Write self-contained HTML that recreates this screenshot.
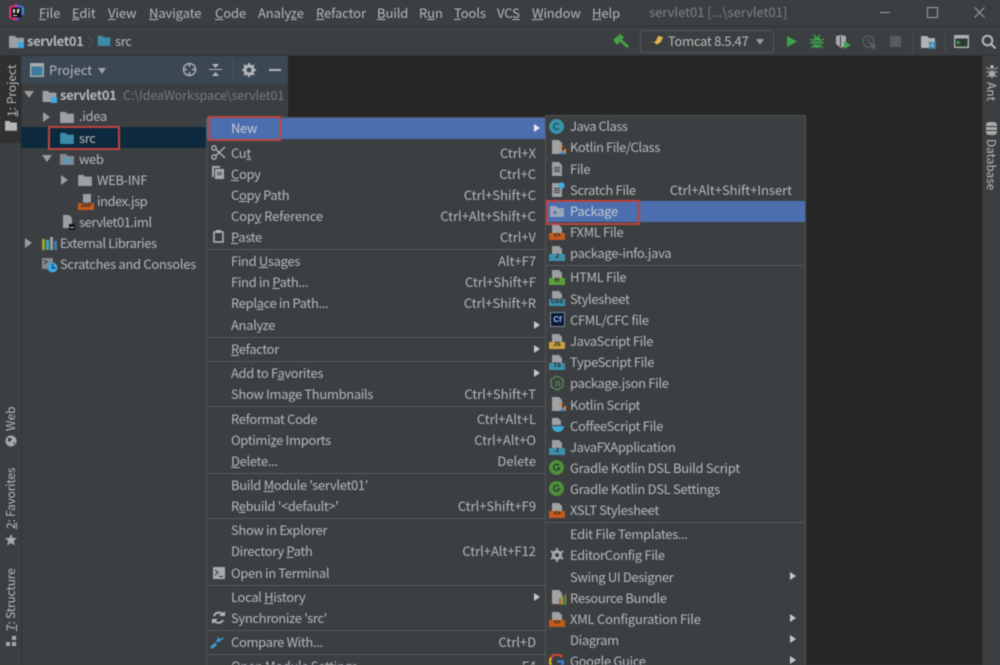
<!DOCTYPE html>
<html><head><meta charset="utf-8"><style>
html,body{margin:0;padding:0;width:1000px;height:665px;overflow:hidden;background:#3c3f41}
#w{position:absolute;left:0;top:0;width:1000px;height:665px;overflow:hidden;filter:blur(.4px);font-family:"Noto Sans CJK SC","Liberation Sans",sans-serif;font-size:13px;color:#b6b8ba;background:#3c3f41}
.a,.t,.s,svg.i{position:absolute}
.t,.s{white-space:nowrap;line-height:16px;height:16px}
.t{letter-spacing:-.35px}
.s{letter-spacing:-.04px}
.m{letter-spacing:-.1px}
u{text-underline-offset:1px;text-decoration-thickness:1px}
.v{transform-origin:0 0;transform:rotate(-90deg);letter-spacing:-.2px}
.sep{position:absolute;height:1px;background:#55585a}
.tri{position:absolute;width:0;height:0;border-left:6px solid #c4c6c8;border-top:4.5px solid transparent;border-bottom:4.5px solid transparent}
.tr{position:absolute;width:0;height:0;border-left:7px solid #9a9c9e;border-top:5px solid transparent;border-bottom:5px solid transparent}
.td{position:absolute;width:0;height:0;border-top:7px solid #9a9c9e;border-left:5px solid transparent;border-right:5px solid transparent}
.tag{position:absolute;font:bold 6px/7px "Liberation Sans",sans-serif;text-align:center;width:16px;height:7px}
.red{position:absolute;border:2px solid #bd443e;box-sizing:border-box}
</style></head><body><div id="w">
<svg width="0" height="0" style="position:absolute"><defs>
<symbol id="fo" viewBox="0 0 16 14"><path d="M0 1h6l2 2h8v11H0z"/></symbol>
<symbol id="fi" viewBox="0 0 16 16"><path fill="#9da0a2" d="M3 1h7l3 3v11H3z"/><path fill="#3c3f41" d="M5 6h6v1H5zM5 8h6v1H5zM5 10h6v1H5z"/></symbol>
</defs></svg>

<!-- title bar -->
<div class="a" style="left:0;top:0;width:1000px;height:26px;background:#3c3f41"></div>
<div class="a" style="left:0;top:26px;width:1000px;height:1px;background:#323232"></div>
<svg class="i" style="left:8px;top:4px" width="17" height="17" viewBox="0 0 17 17"><path fill="#d9336f" d="M1 3 8 0v17l-7-3z"/><path fill="#7a4fd8" d="M8 0l8 3v7L8 17z"/><path fill="#2f8fd8" d="M12 1l4 3v5l-4 3z"/><rect x="3.500" y="3.500" width="10" height="10" fill="#111"/><path fill="#ddd" d="M5 11h4v1H5zM5 5h2v4H5zM9 5h3v1h-1v3H9z"/></svg>
<span class="t m" style="left:39px;top:5px"><u>F</u>ile</span>
<span class="t m" style="left:72px;top:5px"><u>E</u>dit</span>
<span class="t m" style="left:108px;top:5px"><u>V</u>iew</span>
<span class="t m" style="left:149px;top:5px"><u>N</u>avigate</span>
<span class="t m" style="left:215px;top:5px"><u>C</u>ode</span>
<span class="t m" style="left:258px;top:5px">Analy<u>z</u>e</span>
<span class="t m" style="left:316px;top:5px"><u>R</u>efactor</span>
<span class="t m" style="left:377px;top:5px"><u>B</u>uild</span>
<span class="t m" style="left:419px;top:5px">R<u>u</u>n</span>
<span class="t m" style="left:454px;top:5px"><u>T</u>ools</span>
<span class="t m" style="left:497px;top:5px">VC<u>S</u></span>
<span class="t m" style="left:532px;top:5px"><u>W</u>indow</span>
<span class="t m" style="left:592px;top:5px"><u>H</u>elp</span>
<span class="t" style="left:649px;top:4px;color:#7f8183;letter-spacing:-.02px">servlet01 [...\servlet01]</span>
<div class="a" style="left:880px;top:12px;width:10px;height:1px;background:#a0a2a4"></div>
<div class="a" style="left:927px;top:7px;width:9px;height:9px;border:1px solid #a0a2a4"></div>
<svg class="i" style="left:974px;top:7px" width="11" height="11"><path d="M.5.5l10 10M10.500.5l-10 10" stroke="#a0a2a4" fill="none"/></svg>

<!-- nav bar -->
<svg class="i" style="left:9px;top:35px;fill:#9da0a2" width="15" height="13"><use href="#fo"/></svg>
<div class="a" style="left:18px;top:42px;width:6px;height:6px;background:#3fa8e0"></div>
<span class="t" style="left:27px;top:33px;font-weight:bold">servlet01</span>
<svg class="i" style="left:87px;top:34px" width="6" height="15"><path d="M1 1l4 6.500-4 6.500" stroke="#555" fill="none"/></svg>
<svg class="i" style="left:97px;top:35px;fill:#3d8aa8" width="14" height="11"><use href="#fo"/></svg>
<span class="t" style="left:115px;top:33px">src</span>

<svg class="i" style="left:612px;top:33px" width="18" height="16"><path d="M1 7L8 1l4 3-7 8z" fill="#43a047"/><path d="M7 6l9 8" stroke="#43a047" stroke-width="3"/></svg>
<div class="a" style="left:640px;top:30px;width:132px;height:21px;border:1px solid #55585a;border-radius:3px"></div>
<svg class="i" style="left:650px;top:35px" width="14" height="11"><path d="M1 8l5-2 2-5 5 1-2 5-5 3z" fill="#e0b84a"/><path d="M0 9l7 1-3-3z" fill="#333"/></svg>
<span class="t" style="left:668px;top:33px;letter-spacing:-.3px;color:#bbb">Tomcat 8.5.47</span>
<div class="a" style="left:756px;top:39px;width:0;height:0;border-top:6px solid #9a9c9e;border-left:4.500px solid transparent;border-right:4.500px solid transparent"></div>
<svg class="i" style="left:786px;top:35px" width="12" height="13"><path d="M1 1l10 5.500L1 12z" fill="#3fa34d"/></svg>
<svg class="i" style="left:810px;top:34px" width="14" height="15"><ellipse cx="7" cy="8.500" rx="4.500" ry="5.500" fill="#3fa34d"/><path d="M0 5l4 2M14 5l-4 2M0 9h3M14 9h-3M1 14l3-2M13 14l-3-2M4 1l2 2M10 1L8 3" stroke="#3fa34d" stroke-width="1.300"/><path d="M3 7h8M3 10h8" stroke="#3c3f41"/></svg>
<svg class="i" style="left:835px;top:34px" width="17" height="16"><path d="M1 2l5-1 5 1v6l-1 4-4 2-5-4z" fill="#a8aaac"/><path d="M5 2h1v11H5z" fill="#3c3f41"/><path d="M9 7l7 4-7 4z" fill="#3fa34d"/></svg>
<svg class="i" style="left:862px;top:35px" width="16" height="15"><circle cx="6.500" cy="6.500" r="5.500" fill="none" stroke="#5c5f61" stroke-width="1.300"/><path d="M6.500 3v4l2 2" stroke="#5c5f61" fill="none"/><path d="M8 7l7 4-3 1 1 3-3-1z" fill="#5c5f61"/></svg>
<div class="a" style="left:890px;top:36px;width:11px;height:11px;background:#595b5d"></div>
<div class="a" style="left:912px;top:32px;width:1px;height:20px;background:#4a4d4f"></div>
<svg class="i" style="left:921px;top:35px" width="16" height="14"><path d="M0 1h6l2 2h6v10H0z" fill="#afb1b3"/><path d="M8 7h3v3H8zM12 7h3v3h-3zM8 11h3v3H8zM12 11h3v3h-3z" fill="#2f82b8"/></svg>
<div class="a" style="left:945px;top:32px;width:1px;height:20px;background:#4a4d4f"></div>
<svg class="i" style="left:954px;top:35px" width="15" height="13"><rect x=".7" y=".7" width="13.600" height="11.600" fill="#2d3a33" stroke="#afb1b3" stroke-width="1.400"/><rect x="1" y="1" width="13" height="2.500" fill="#afb1b3"/><path d="M3 5.500l4 2-4 2z" fill="#3fa34d"/></svg>
<svg class="i" style="left:981px;top:34px" width="16" height="15"><circle cx="6.500" cy="6.500" r="4.800" fill="none" stroke="#b4b6b8" stroke-width="2"/><path d="M10 10l4.500 4.500" stroke="#b4b6b8" stroke-width="2.200"/></svg>
<div class="a" style="left:0;top:55px;width:1000px;height:1px;background:#303234"></div>

<!-- editor -->
<div class="a" style="left:288px;top:56px;width:695px;height:609px;background:#262626"></div>
<!-- right strip -->
<div class="a" style="left:982px;top:56px;width:18px;height:609px;background:#3c3f41;border-left:1px solid #333"></div>
<svg class="i" style="left:985px;top:64px" width="14" height="14"><ellipse cx="7" cy="3" rx="2" ry="2" fill="#a8aaac"/><ellipse cx="7" cy="10" rx="3" ry="3.500" fill="#a8aaac"/><path d="M1 3l4 3M13 3L9 6M1 8h4M13 8H9M2 13l3-3M12 13L9 10" stroke="#a8aaac"/></svg>
<span class="t" style="left:999px;top:82px;font-size:12px;transform:rotate(90deg);transform-origin:0 0;letter-spacing:0">Ant</span>
<svg class="i" style="left:985px;top:121px" width="13" height="15"><rect x="1" y="1" width="11" height="13" rx="3" fill="#a8aaac"/><path d="M1 5.500h11M1 9.500h11" stroke="#3c3f41"/></svg>
<span class="t" style="left:999px;top:139px;font-size:12px;transform:rotate(90deg);transform-origin:0 0;letter-spacing:-.1px">Database</span>

<!-- left strip -->
<div class="a" style="left:0;top:56px;width:21px;height:609px;background:#3c3f41;border-right:1px solid #333"></div>
<div class="a" style="left:0;top:56px;width:21px;height:87px;background:#2e3032"></div>
<span class="t v" style="left:4px;top:117px;font-size:12px;letter-spacing:0"><u>1</u>: Project</span>
<svg class="i" style="left:5px;top:120px;fill:#b4b6b8" width="12" height="11"><use href="#fo"/></svg>
<span class="t v" style="left:3px;top:431px;font-size:12px;letter-spacing:0">Web</span>
<svg class="i" style="left:5px;top:435px" width="12" height="12"><circle cx="6" cy="6" r="5.500" fill="#a8aaac"/><path d="M3 3h4l-1 3-3 1zM8 8l2-1-1 3z" fill="#3c3f41"/></svg>
<span class="t v" style="left:3px;top:529px;font-size:12px"><u>2</u>: Favorites</span>
<svg class="i" style="left:4px;top:533px" width="14" height="14"><path d="M7 1l1.800 4H13l-3.300 3 1.200 4.500L7 10l-3.900 2.500L4.300 8 1 5h4.200z" fill="#a8aaac"/></svg>
<span class="t v" style="left:3px;top:631px;font-size:12px"><u>7</u>: Structure</span>
<svg class="i" style="left:6px;top:636px" width="10" height="11"><path d="M6 0h4v4H6zM0 6h4v4H0zM6 6h4v4H6z" fill="#a8aaac"/></svg>

<!-- project panel -->
<div class="a" style="left:22px;top:56px;width:266px;height:609px;background:#3c3f41"></div>
<div class="a" style="left:21px;top:56px;width:267px;height:27px;background:#3c4754"></div>
<svg class="i" style="left:30px;top:63px" width="14" height="14"><rect x=".7" y=".7" width="12.600" height="12.600" fill="#3f7a9e" stroke="#a8aaac" stroke-width="1.400"/><rect x="1" y="1" width="12" height="2.500" fill="#a8aaac"/></svg>
<span class="t" style="left:49px;top:62px;letter-spacing:0">Project</span>
<div class="a" style="left:98px;top:68px;width:0;height:0;border-top:6px solid #a0a2a4;border-left:4.500px solid transparent;border-right:4.500px solid transparent"></div>
<svg class="i" style="left:182px;top:62px" width="15" height="15"><circle cx="7.500" cy="7.500" r="6" fill="none" stroke="#b4b6b8" stroke-width="1.300"/><path d="M7.500 1v4M7.500 10v4M1 7.500h4M10 7.500h4" stroke="#b4b6b8" stroke-width="1.500"/></svg>
<svg class="i" style="left:209px;top:63px" width="13" height="14"><path d="M0 6.500h13" stroke="#b4b6b8"/><path d="M3 1h7L6.500 5zM3 13h7L6.500 9z" fill="#b4b6b8"/></svg>
<div class="a" style="left:232px;top:60px;width:1px;height:20px;background:#4b5560"></div>
<svg class="i" style="left:242px;top:63px" width="14" height="14"><circle cx="7" cy="7" r="4" fill="none" stroke="#b4b6b8" stroke-width="3"/><path d="M7 0v3M7 11v3M0 7h3M11 7h3M2 2l2 2M10 10l2 2M12 2l-2 2M4 10l-2 2" stroke="#b4b6b8" stroke-width="2"/></svg>
<div class="a" style="left:269px;top:69px;width:12px;height:2px;background:#b4b6b8"></div>

<!-- tree -->
<div class="a" style="left:21px;top:127px;width:186px;height:21px;background:#0d293e"></div>
<div class="td" style="left:24px;top:91px"></div>
<svg class="i" style="left:42px;top:90px;fill:#9da0a2" width="15" height="12"><use href="#fo"/></svg>
<div class="a" style="left:51px;top:97px;width:6px;height:6px;background:#3fa8e0"></div>
<span class="t" style="left:60px;top:87px;font-weight:bold">servlet01</span>
<span class="t" style="left:123px;top:87px;color:#787a7c;font-size:12.500px;letter-spacing:-.08px">C:\IdeaWorkspace\servlet01</span>
<div class="tr" style="left:43px;top:112px"></div>
<svg class="i" style="left:60px;top:111px;fill:#9da0a2" width="14" height="12"><use href="#fo"/></svg>
<span class="t" style="left:79px;top:108px">.idea</span>
<svg class="i" style="left:60px;top:132px;fill:#3d8aa8" width="14" height="12"><use href="#fo"/></svg>
<span class="t" style="left:79px;top:130px;color:#bbb">src</span>
<div class="td" style="left:42px;top:155px"></div>
<svg class="i" style="left:60px;top:153px" width="14" height="12"><path d="M0 1h6l2 2h6v9H0z" fill="#7f8a90"/><circle cx="6.500" cy="7.500" r="2" fill="none" stroke="#3fa8e0" stroke-width="1.300"/></svg>
<span class="t" style="left:79px;top:151px">web</span>
<div class="tr" style="left:61px;top:175px"></div>
<svg class="i" style="left:78px;top:174px;fill:#9da0a2" width="14" height="12"><use href="#fo"/></svg>
<span class="t" style="left:97px;top:172px">WEB-INF</span>
<svg class="i" style="left:80px;top:194px" width="14" height="11"><path d="M3 0h8v11H3z" fill="#9da0a2"/></svg>
<div class="tag" style="left:78px;top:203px;height:7px;background:#c25a1e;color:#2b2b2b">JSP</div>
<span class="t" style="left:97px;top:193px;letter-spacing:-.5px">index.jsp</span>
<svg class="i" style="left:62px;top:215px" width="13" height="15"><path d="M1 0h6l3 3v10H1z" fill="#9da0a2"/><rect x="7" y="9" width="6" height="6" fill="#111"/><rect x="8" y="12" width="4" height="1" fill="#ccc"/></svg>
<span class="t" style="left:79px;top:214px;letter-spacing:-.45px">servlet01.iml</span>
<div class="tr" style="left:25px;top:238px"></div>
<svg class="i" style="left:42px;top:237px" width="15" height="13"><path d="M0 2h3v11H0z" fill="#a0a23e"/><path d="M4 3h3v10H4z" fill="#3fa8b0"/><path d="M8 0h3v13H8z" fill="#9da0a2"/><path d="M12 4h3v9h-3z" fill="#3f7fb0"/></svg>
<span class="t" style="left:60px;top:235px;letter-spacing:-.45px">External Libraries</span>
<svg class="i" style="left:42px;top:257px" width="16" height="16"><path d="M0 1h11v7L7 12H0z" fill="#7f8a90"/><path d="M2 3l3 2-3 2" stroke="#333" fill="none"/><circle cx="10.500" cy="10.500" r="5" fill="#3fa8e0"/><path d="M10.500 7v4h3" stroke="#123" fill="none"/></svg>
<span class="t" style="left:60px;top:256px;letter-spacing:-.32px">Scratches and Consoles</span>

<!-- main menu -->
<div class="a" style="left:206px;top:117px;width:340px;height:549px;background:#3c3f41;border:1px solid #515355;box-sizing:border-box"></div>
<div class="a" style="left:207px;top:118px;width:338px;height:21px;background:#4b6eaf"></div>
<span class="t" style="left:231px;top:120px;color:#c6c9cc">New</span>
<div class="tri" style="left:534px;top:124px;border-left-color:#e8eaec"></div>

<svg class="i" style="left:211px;top:145px" width="15" height="15"><circle cx="3" cy="3" r="2.200" fill="none" stroke="#b4b6b8" stroke-width="1.300"/><circle cx="3" cy="12" r="2.200" fill="none" stroke="#b4b6b8" stroke-width="1.300"/><path d="M5 4.500L14 13M5 10.500L14 2" stroke="#b4b6b8" stroke-width="1.300"/></svg>
<span class="t" style="left:231px;top:145px">Cu<u>t</u></span><span class="s" style="right:464px;top:145px">Ctrl+X</span>
<svg class="i" style="left:212px;top:166px" width="13" height="14"><path d="M0 0h8v2H2v9H0z" fill="#a8aaac"/><path d="M3 3h9v10H3z" fill="#a8aaac"/><path d="M5 6h5v1H5zM5 8h5v1H5z" fill="#3c3f41"/></svg>
<span class="t" style="left:231px;top:166px"><u>C</u>opy</span><span class="s" style="right:464px;top:166px">Ctrl+C</span>
<span class="t" style="left:231px;top:187px">C<u>o</u>py Path</span><span class="s" style="right:464px;top:187px">Ctrl+Shift+C</span>
<span class="t" style="left:231px;top:208px;letter-spacing:-.15px">Cop<u>y</u> Reference</span><span class="s" style="right:464px;top:208px">Ctrl+Alt+Shift+C</span>
<svg class="i" style="left:213px;top:230px" width="11" height="13"><rect x="1" y="2" width="9" height="10" fill="none" stroke="#b4b6b8" stroke-width="1.500"/><rect x="3" y="0" width="5" height="3" fill="#b4b6b8"/></svg>
<span class="t" style="left:231px;top:229px"><u>P</u>aste</span><span class="s" style="right:464px;top:229px">Ctrl+V</span>
<div class="sep" style="left:207px;top:249px;width:338px"></div>
<span class="t" style="left:231px;top:253px">Find <u>U</u>sages</span><span class="s" style="right:464px;top:253px">Alt+F7</span>
<span class="t" style="left:231px;top:274px">Find in <u>P</u>ath...</span><span class="s" style="right:464px;top:274px">Ctrl+Shift+F</span>
<span class="t" style="left:231px;top:295px">Repl<u>a</u>ce in Path...</span><span class="s" style="right:464px;top:295px">Ctrl+Shift+R</span>
<span class="t" style="left:231px;top:317px">Analyze</span><div class="tri" style="left:534px;top:321px"></div>
<div class="sep" style="left:207px;top:337px;width:338px"></div>
<span class="t" style="left:231px;top:341px"><u>R</u>efactor</span><div class="tri" style="left:534px;top:345px"></div>
<div class="sep" style="left:207px;top:361px;width:338px"></div>
<span class="t" style="left:231px;top:365px">Add to F<u>a</u>vorites</span><div class="tri" style="left:534px;top:369px"></div>
<span class="t" style="left:231px;top:386px">Show Image Thumbnails</span><span class="s" style="right:464px;top:386px">Ctrl+Shift+T</span>
<div class="sep" style="left:207px;top:406px;width:338px"></div>
<span class="t" style="left:231px;top:411px">Reformat Code</span><span class="s" style="right:464px;top:411px">Ctrl+Alt+L</span>
<span class="t" style="left:231px;top:432px">Optimi<u>z</u>e Imports</span><span class="s" style="right:464px;top:432px">Ctrl+Alt+O</span>
<span class="t" style="left:231px;top:453px"><u>D</u>elete...</span><span class="s" style="right:464px;top:453px">Delete</span>
<div class="sep" style="left:207px;top:473px;width:338px"></div>
<span class="t" style="left:231px;top:477px">Build <u>M</u>odule 'servlet01'</span>
<span class="t" style="left:231px;top:498px">R<u>e</u>build '&lt;default&gt;'</span><span class="s" style="right:464px;top:498px">Ctrl+Shift+F9</span>
<div class="sep" style="left:207px;top:518px;width:338px"></div>
<span class="t" style="left:231px;top:522px">Show in Explorer</span>
<span class="t" style="left:231px;top:543px">Directory <u>P</u>ath</span><span class="s" style="right:464px;top:543px">Ctrl+Alt+F12</span>
<svg class="i" style="left:213px;top:567px" width="12" height="12"><rect width="12" height="12" fill="#a8aaac"/><path d="M2 3l3 2.500L2 8" stroke="#333" fill="none"/><path d="M6 9h4v1H6z" fill="#333"/></svg>
<span class="t" style="left:231px;top:565px">Open in Terminal</span>
<div class="sep" style="left:207px;top:585px;width:338px"></div>
<span class="t" style="left:231px;top:589px">Local <u>H</u>istory</span><div class="tri" style="left:534px;top:593px"></div>
<svg class="i" style="left:212px;top:611px" width="13" height="13"><path d="M11 4A5 5 0 0 0 2 5M2 9a5 5 0 0 0 9 0" fill="none" stroke="#b4b6b8" stroke-width="2"/><path d="M7 5h6V0zM6 8H0v5z" fill="#b4b6b8"/></svg>
<span class="t" style="left:231px;top:610px">Synchronize 'src'</span>
<div class="sep" style="left:207px;top:630px;width:338px"></div>
<svg class="i" style="left:210px;top:635px" width="16" height="14"><path d="M0 12l6-5v2l1 1-5 4z" fill="#3d9ad6"/><path d="M7 5l1-4 1 3 6-2-6 5-3 0z" fill="#3d9ad6"/></svg>
<span class="t" style="left:231px;top:634px">Compare With...</span><span class="s" style="right:464px;top:634px">Ctrl+D</span>
<div class="sep" style="left:207px;top:654px;width:338px"></div>
<span class="t" style="left:231px;top:658px">Open Module Settings</span><span class="s" style="right:464px;top:658px">F4</span>

<!-- submenu -->
<div class="a" style="left:545px;top:115px;width:261px;height:551px;background:#3c3f41;border:1px solid #515355;box-sizing:border-box"></div>
<div class="a" style="left:546px;top:201px;width:259px;height:21px;background:#4b6eaf"></div>

<svg class="i" style="left:549px;top:119px" width="15" height="15"><circle cx="7.500" cy="7.500" r="7.500" fill="#3a93a8"/><path d="M10 5.500a3 3 0 1 0 0 4" fill="none" stroke="#1d4f5c" stroke-width="1.300"/></svg>
<span class="t" style="left:570px;top:118px;letter-spacing:-.5px">Java Class</span>
<svg class="i" style="left:551px;top:140px" width="15" height="15"><path d="M1 0h7l3 3v11H1z" fill="#a0a2a4"/><path d="M8 14l7-6v6zM8 9l5-3H8z" fill="#e07b2a"/><path d="M8 14l4-3 3 3z" fill="#3d8ed8"/></svg>
<span class="t" style="left:570px;top:139px;letter-spacing:-.42px">Kotlin File/Class</span>
<svg class="i" style="left:549px;top:161px" width="16" height="16"><use href="#fi"/></svg>
<span class="t" style="left:570px;top:161px">File</span>
<svg class="i" style="left:549px;top:182px" width="16" height="16"><use href="#fi"/><circle cx="12.500" cy="3.500" r="3.200" fill="#3fa8e0"/></svg>
<span class="t" style="left:570px;top:182px">Scratch File</span><span class="s" style="right:208px;top:182px">Ctrl+Alt+Shift+Insert</span>
<svg class="i" style="left:550px;top:205px" width="14" height="12"><path d="M0 1h6l2 2h6v9H0z" fill="#9aa6b8"/><circle cx="5" cy="7.500" r="1.500" fill="#4b6eaf"/></svg>
<span class="t" style="left:570px;top:203px;color:#c6c9cc">Package</span>

<svg class="i" style="left:550px;top:225px" width="13" height="9"><path d="M2 0h7l3 3v6H2z" fill="#9da0a2"/></svg><div class="tag" style="left:549px;top:233px;background:#c25a1e;color:#222">&lt;&gt;</div>
<span class="t" style="left:570px;top:224px">FXML File</span>
<svg class="i" style="left:550px;top:246px" width="13" height="9"><path d="M2 0h7l3 3v6H2z" fill="#9da0a2"/></svg><div class="tag" style="left:549px;top:254px;background:#3d8ea8;color:#222">J</div>
<span class="t" style="left:570px;top:245px">package-info.java</span>
<div class="sep" style="left:546px;top:265px;width:259px"></div>
<svg class="i" style="left:550px;top:270px" width="13" height="9"><path d="M2 0h7l3 3v6H2z" fill="#9da0a2"/></svg><div class="tag" style="left:549px;top:278px;background:#5a9e3a;color:#222">H</div>
<span class="t" style="left:570px;top:269px">HTML File</span>
<svg class="i" style="left:550px;top:291px" width="13" height="9"><path d="M2 0h7l3 3v6H2z" fill="#9da0a2"/></svg><div class="tag" style="left:549px;top:299px;background:#3d8ea8;color:#222">CSS</div>
<span class="t" style="left:570px;top:291px">Stylesheet</span>
<div class="a" style="left:550px;top:312px;width:13px;height:13px;background:#0c1a3a;border:1px solid #7f8a90;font:bold 8px/13px 'Liberation Sans',sans-serif;color:#9cc0f0;text-align:center">Cf</div>
<span class="t" style="left:570px;top:312px">CFML/CFC file</span>
<svg class="i" style="left:550px;top:334px" width="13" height="9"><path d="M2 0h7l3 3v6H2z" fill="#9da0a2"/></svg><div class="tag" style="left:549px;top:342px;background:#c9a040;color:#222">JS</div>
<span class="t" style="left:570px;top:333px">JavaScript File</span>
<svg class="i" style="left:550px;top:355px" width="13" height="9"><path d="M2 0h7l3 3v6H2z" fill="#9da0a2"/></svg><div class="tag" style="left:549px;top:363px;background:#3d8ea8;color:#222">TS</div>
<span class="t" style="left:570px;top:354px">TypeScript File</span>
<svg class="i" style="left:550px;top:375px" width="14" height="16"><path d="M7 1l6 3.500v7L7 15l-6-3.500v-7z" fill="none" stroke="#5f8f5a" stroke-width="1.200"/><path d="M6 6v5M9.500 6.500c-2-.5-2 1.500 0 2s0 2.500-1.500 1.500" stroke="#5f8f5a" fill="none"/></svg>
<span class="t" style="left:570px;top:375px">package.json File</span>
<svg class="i" style="left:551px;top:397px" width="15" height="15"><path d="M1 0h7l3 3v11H1z" fill="#a0a2a4"/><path d="M8 14l7-6v6zM8 9l5-3H8z" fill="#e07b2a"/><path d="M8 14l4-3 3 3z" fill="#3d8ed8"/></svg>
<span class="t" style="left:570px;top:397px">Kotlin Script</span>
<svg class="i" style="left:550px;top:418px" width="15" height="16"><path d="M2 0h6l3 3v4H2z" fill="#a0a2a4"/><path d="M2 8h12a6 6 0 0 1-12 0z" fill="#3fa8d8"/></svg>
<span class="t" style="left:570px;top:418px">CoffeeScript File</span>
<svg class="i" style="left:550px;top:440px" width="13" height="9"><path d="M2 0h7l3 3v6H2z" fill="#9da0a2"/></svg><div class="tag" style="left:549px;top:448px;background:#3d8ea8;color:#222">J</div>
<span class="t" style="left:570px;top:439px">JavaFXApplication</span>
<svg class="i" style="left:549px;top:460px" width="15" height="15"><circle cx="7.500" cy="7.500" r="7.500" fill="#4f8f3a"/><path d="M10 5.500a3 3 0 1 0 .5 2.500H8" fill="none" stroke="#233" stroke-width="1.200"/></svg>
<span class="t" style="left:570px;top:460px;letter-spacing:-.3px">Gradle Kotlin DSL Build Script</span>
<svg class="i" style="left:549px;top:481px" width="15" height="15"><circle cx="7.500" cy="7.500" r="7.500" fill="#4f8f3a"/><path d="M10 5.500a3 3 0 1 0 .5 2.500H8" fill="none" stroke="#233" stroke-width="1.200"/></svg>
<span class="t" style="left:570px;top:481px;letter-spacing:-.3px">Gradle Kotlin DSL Settings</span>
<svg class="i" style="left:550px;top:503px" width="13" height="9"><path d="M2 0h7l3 3v6H2z" fill="#9da0a2"/></svg><div class="tag" style="left:549px;top:511px;background:#c25a1e;color:#222">&lt;&gt;</div>
<span class="t" style="left:570px;top:502px">XSLT Stylesheet</span>
<div class="sep" style="left:546px;top:522px;width:259px"></div>
<span class="t" style="left:570px;top:526px">Edit File Templates...</span>
<svg class="i" style="left:550px;top:548px" width="14" height="14"><circle cx="7" cy="7" r="3.500" fill="none" stroke="#a8aaac" stroke-width="3"/><path d="M7 0v3M7 11v3M1 3l2.500 2M13 3l-2.500 2M1 11l2.500-2M13 11l-2.500-2" stroke="#a8aaac" stroke-width="2"/></svg>
<span class="t" style="left:570px;top:547px">EditorConfig File</span>
<span class="t" style="left:570px;top:569px">Swing UI Designer</span><div class="tri" style="left:790px;top:572px"></div>
<svg class="i" style="left:551px;top:590px" width="15" height="15"><path d="M1 0h7l3 3v11H1z" fill="#a0a2a4"/><path d="M8 8h2v7H8z" fill="#d0572a"/><path d="M11 6h2v9h-2z" fill="#4f9f3a"/><path d="M14 4h1v11h-1z" fill="#d0a020"/></svg>
<span class="t" style="left:570px;top:590px">Resource Bundle</span>
<svg class="i" style="left:550px;top:612px" width="13" height="9"><path d="M2 0h7l3 3v6H2z" fill="#9da0a2"/></svg><div class="tag" style="left:549px;top:620px;background:#c25a1e;color:#222">&lt;&gt;</div>
<span class="t" style="left:570px;top:611px;letter-spacing:-.23px">XML Configuration File</span><div class="tri" style="left:790px;top:614px"></div>
<span class="t" style="left:570px;top:632px">Diagram</span><div class="tri" style="left:790px;top:635px"></div>
<svg class="i" style="left:549px;top:654px" width="15" height="15"><path d="M13 3A6.500 6.500 0 0 0 2 4" fill="none" stroke="#d8443a" stroke-width="2.500"/><path d="M2 4a6.500 6.500 0 0 0 0 7" fill="none" stroke="#e0b020" stroke-width="2.500"/><path d="M2 11a6.500 6.500 0 0 0 10 1" fill="none" stroke="#3fa34d" stroke-width="2.500"/><path d="M8 7.500h6.500a6.500 6.500 0 0 1-2.500 4.500" fill="none" stroke="#3d7fd8" stroke-width="2.500"/></svg>
<span class="t" style="left:570px;top:653px">Google Guice</span><div class="tri" style="left:790px;top:656px"></div>

<!-- red annotation boxes -->
<div class="red" style="left:48px;top:126px;width:72px;height:24px"></div>
<div class="red" style="left:208px;top:116px;width:73px;height:25px"></div>
<div class="red" style="left:546px;top:200px;width:94px;height:25px"></div>
</div></body></html>
